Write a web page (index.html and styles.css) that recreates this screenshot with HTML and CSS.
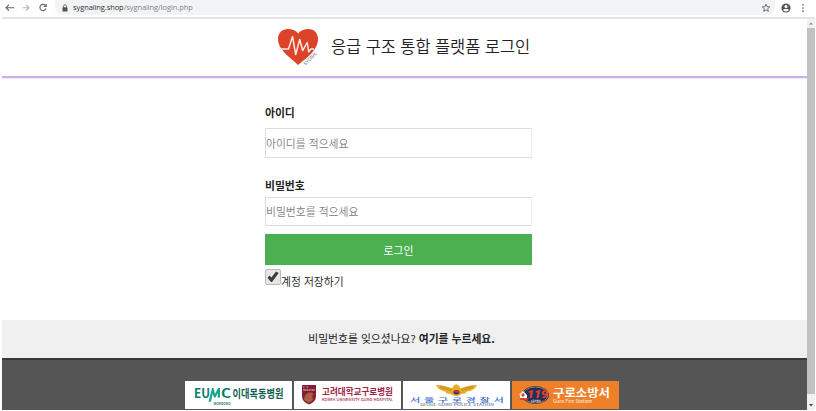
FILE: index.html
```
<!DOCTYPE html>
<html lang="ko">
<head>
<meta charset="utf-8">
<title>응급 구조 통합 플랫폼 로그인</title>
<link rel="stylesheet" href="styles.css">
</head>
<body>
<div class="browser">
  <div class="toolbar">
    <svg class="nav" width="52" height="16" viewBox="0 0 52 16" fill="none" stroke="#5f6368" stroke-width="1.1">
      <path d="M12.300 7.700H4M7 4.700 4 7.700l3 3"/>
      <path stroke="#b4b6b8" d="M20.700 7.700h6M24 4.700l3 3-3 3"/>
      <path d="M43.600 5.800a3.100 3.100 0 1 0 .4 2.500M44.200 4v2.500h-2.500"/>
    </svg>
    <div class="address">
      <svg width="6" height="8" viewBox="0 0 6 8"><path d="M1.500 3.500V2.300a1.500 1.500 0 0 1 3 0v1.200" fill="none" stroke="#5f6368" stroke-width=".9"/><rect x=".5" y="3.200" width="5" height="4.300" rx=".5" fill="#4d5156"/></svg>
      <span class="url"><b>sygnaling.shop</b>/sygnaling/login.php</span>
      <svg class="star" width="10" height="10" viewBox="0 0 10 10"><path d="M5 1.200l1.050 2.500 2.700.2-2.050 1.800.65 2.700L5 6.950 2.650 8.400l.65-2.700-2.050-1.800 2.700-.2z" fill="none" stroke="#5f6368" stroke-width=".9"/></svg>
    </div>
    <svg class="user" width="10" height="10" viewBox="0 0 10 10"><circle cx="5" cy="5" r="4.600" fill="#55595e"/><circle cx="5" cy="3.500" r="1.500" fill="#fff"/><path d="M2 7.100c.5-1.500 5.500-1.500 6 0-1.300 1.700-4.700 1.700-6 0z" fill="#fff"/></svg>
    <svg class="more" width="4" height="10" viewBox="0 0 4 10" fill="#5f6368"><circle cx="2" cy="1.800" r=".85"/><circle cx="2" cy="5" r=".85"/><circle cx="2" cy="8.200" r=".85"/></svg>
  </div>
  <div class="viewport">
    <div class="page">
      <header class="header">
        <svg class="heart" width="44" height="42" viewBox="0 0 44 42">
          <path d="M21 38C17 33 1 24 1 12 1 5.500 5.500 2 11 2c4.500 0 8 1.500 10.200 4.500C23.500 3.500 27 2 31.500 2c5.500 0 9.500 4 9.500 10 0 12-13.500 20.500-20 26z" fill="#dc4328"/>
          <path d="M1 22h10.500l4-12.500 3.200 18 4-15 3 11 4.500-8 1.500 9.500 2-3H37" fill="none" stroke="#fbe9e4" stroke-width="1.500" stroke-linejoin="round"/>
          <text class="mark" transform="translate(28.500 38.500) rotate(-45)" textLength="17" lengthAdjust="spacingAndGlyphs">SYGNAL</text>
        </svg>
        <h1>응급 구조 통합 플랫폼 로그인</h1>
      </header>
      <main class="main">
        <form class="login">
          <label for="uid">아이디</label>
          <input class="field" id="uid" type="text" placeholder="아이디를 적으세요">
          <label class="second" for="pw">비밀번호</label>
          <input class="field" id="pw" type="password" placeholder="비밀번호를 적으세요">
          <button type="button">로그인</button>
          <div class="remember">
            <span class="check"><svg width="14" height="14" viewBox="0 0 14 14"><path d="M1.500 7.700l2-2.100 1.900 1.800 4.700-6 2.600 1.700-6.500 8.600q-.7.700-1.400 0z" fill="#3c3c3c"/></svg></span>
            <span>계정 저장하기</span>
          </div>
        </form>
      </main>
      <div class="forgot">비밀번호를 잊으셨나요? <b>여기를 누르세요.</b></div>
      <footer class="footer">
        <svg class="partner" width="107" height="28" viewBox="0 0 107 28">
          <g class="gothic">
            <text x="9" y="16.500" font-size="12.500" fill="#087b6d" textLength="16" lengthAdjust="spacingAndGlyphs">EU</text>
            <text x="36" y="16.500" font-size="12.500" fill="#087b6d" textLength="10" lengthAdjust="spacingAndGlyphs">C</text>
            <path d="M23.500 21l3.500-14h1.500l1.500 6 3-6H35v9.500h-2.300v-4.500l-2.200 4.500H29l-1.200-4-1.800 8z" fill="#18a18b"/>
            <text x="28.500" y="23.500" font-size="3.500" fill="#17826f" textLength="17" lengthAdjust="spacingAndGlyphs">MOKDONG</text>
            <text x="47.500" y="16.500" font-size="11.500" fill="#146052" textLength="51" lengthAdjust="spacingAndGlyphs">이대목동병원</text>
          </g>
        </svg>
        <svg class="partner" width="107" height="28" viewBox="0 0 107 28">
          <path d="M8 4h14v11q0 6-7 8.500Q8 21 8 15z" fill="#861d35"/>
          <path d="M10 19c1-6 3-7.500 7-7.500l3 2-2 1 1 4.500-4 3z" fill="#aa613f"/>
          <g class="gothic" fill="#a32345">
            <text x="9" y="7" font-size="2" fill="#e0b9bd" textLength="5">KU</text>
            <text x="9" y="10.200" font-size="2.300" fill="#e0b9bd" textLength="12" lengthAdjust="spacingAndGlyphs">MEDICINE</text>
            <text x="28" y="14" font-size="9.500" textLength="71" lengthAdjust="spacingAndGlyphs">고려대학교구로병원</text>
            <text x="28" y="19.800" font-size="3.800" font-weight="500" textLength="71" lengthAdjust="spacingAndGlyphs">KOREA UNIVERSITY GURO HOSPITAL</text>
          </g>
        </svg>
        <svg class="partner" width="107" height="28" viewBox="0 0 107 28">
          <path d="M33 4c6 0 11 1.500 16 3.500l2-3.200 2.500-1 2.500 1.200 1.500 3c5-2 10-3.500 16.500-3.500-1 3-4 5-7 6l-3 .5-2 2-4 .5c-1 1.500-3 2-5 2s-4-.5-5-2l-4-.5-2-2-2-.5c-3-1-6-3-7-6z" fill="#e5ac27"/>
          <path d="M37 6.500l11 3M37 5l12 3.500M70 6.500l-11 3M70 5l-12 3.500" stroke="#b87d1d" stroke-width=".6"/>
          <ellipse cx="53.500" cy="11.200" rx="3" ry="2.200" fill="#263e79"/><path d="M50.500 11.200a3 2.200 0 0 1 6 0q-1.500 1-3 0t-3 0z" fill="#d4312c"/>
          <text class="wide" font-size="9" fill="#3c71d0" textLength="75" lengthAdjust="spacing" transform="translate(7 20.800) scale(1.250 .64)">서울구로경찰서</text>
          <text class="wide" x="17" y="25.300" font-size="2.800" fill="#657083" textLength="74" lengthAdjust="spacingAndGlyphs">SEOUL GURO POLICE STATION</text>
        </svg>
        <svg class="partner fire" width="107" height="28" viewBox="0 0 107 28">
          <ellipse cx="23.500" cy="14" rx="13.500" ry="9" fill="#1f3158"/><ellipse cx="23.500" cy="14" rx="12.500" ry="8" fill="none" stroke="#d3915d" stroke-width=".7"/>
          <path d="M7 14l4-4 4 4v4H8v-4z" fill="#fff"/><path d="M8 17h9l-2 2H8zM11 12l2 2-2 2-2-2z" fill="#d83e31"/>
          <text class="num" x="15" y="17" textLength="21" lengthAdjust="spacingAndGlyphs">119</text>
          <g class="gothic" fill="#fff">
            <text x="18.500" y="20.800" font-size="2.300" textLength="10" lengthAdjust="spacingAndGlyphs">구로소방서</text>
            <text x="41" y="16" font-size="10.800" textLength="57" lengthAdjust="spacingAndGlyphs">구로소방서</text>
            <text x="41" y="21.600" font-size="4.200" fill="#ffe2cb" font-weight="500" textLength="39" lengthAdjust="spacingAndGlyphs">Guro Fire Station</text>
          </g>
        </svg>
      </footer>
    </div>
    <div class="scrollbar">
      <svg width="8" height="9" viewBox="0 0 8 9"><path d="M2 5.500l2-2 2 2z" fill="#858585"/></svg>
      <div class="thumb"></div>
      <svg width="8" height="16" viewBox="0 0 8 16"><path d="M2 10h4l-2 2.500z" fill="#444"/></svg>
    </div>
  </div>
</div>
</body>
</html>
```
FILE: styles.css
```
* { box-sizing: border-box; }
body {
  margin: 0;
  background: #fff;
  color: #222;
  font-family: "Noto Sans CJK KR", sans-serif;
  overflow: hidden;
}
.browser { width: 816px; height: 411px; display: flex; flex-direction: column; padding: 0 1px 1px 2px; }
.toolbar { height: 19px; display: flex; align-items: flex-start; border-bottom: 2px solid #e4e4e4; flex: none; }
.nav { flex: none; }
.address {
  width: 720px; height: 15px; margin-left: 1px; padding: 0 4px 0 7px;
  display: flex; align-items: center; gap: 5px;
  background: #f1f3f4; border-radius: 0 0 8px 8px;
}
.url { font: 7.5px/15px "Open Sans", sans-serif; color: #80868b; letter-spacing: -.09px; }
.url b { font-weight: 400; color: #303134; }
.star { margin-left: auto; }
.user { margin: 3px 0 0 6px; }
.more { margin: 3px 0 0 10px; }
.viewport { display: flex; flex: 1; min-height: 0; }
.page { flex: 1; display: flex; flex-direction: column; min-width: 0; }
.header {
  height: 59px; flex: none; display: flex; align-items: center;
  padding: 0 0 1px 275px; border-bottom: 2px solid #c9b1eb;
  box-shadow: 0 1px 0 #efe8f8;
}
.heart { margin-top: 2px; flex: none; overflow: visible; }
h1 { margin: -2px 0 0 10px; font-size: 16.5px; line-height: 24px; font-weight: 350; letter-spacing: -.1px; white-space: nowrap; }
.mark { font: 5px "Liberation Sans", sans-serif; fill: #666; }
.main { height: 242px; flex: none; padding: 26px 0 0 263px; }
.login { width: 267px; display: flex; flex-direction: column; }
label { font-size: 10.8px; line-height: 16px; font-weight: 700; }
.second { margin-top: 19px; }
.field {
  height: 30px; margin-top: 8px; padding: 0 0 1px;
  border: 1px solid #ddd; border-right-color: #eee;
  font: 350 10.8px "Noto Sans CJK KR", sans-serif; background: #fff; border-radius: 0;
}
.second + .field { height: 29px; margin-top: 4px; }
.field::placeholder { color: #808080; opacity: 1; }
button {
  height: 31px; margin-top: 8px; padding: 0; border: 0;
  background: #4caf50; color: #fff; font: 400 10.8px "Noto Sans CJK KR", sans-serif;
}
.remember { display: flex; margin-top: 4px; font-size: 10.8px; line-height: 25px; font-weight: 350; }
.check { width: 16px; height: 16px; display: flex; border: 1px solid #b9b9b9; border-radius: 2px; background: #e6e6e6; }
.forgot { height: 38px; flex: none; background: #f0f0f0; text-align: center; font-size: 10.8px; line-height: 37px; padding-right: 6px; }
.footer { flex: 1; background: #555; border-top: 2px solid #393939; padding: 21px 0 0 183px; display: flex; gap: 2px; }
.partner { background: #fff; flex: none; overflow: visible; }
.fire { background: #ed8029; }
.gothic { font-family: "Noto Sans CJK KR", sans-serif; font-weight: 700; }
.wide { font-family: "Noto Sans CJK KR", sans-serif; font-weight: 500; }
.num { font: italic 900 10.5px Roboto, sans-serif; fill: #e8402f; }
.scrollbar { width: 8px; flex: none; background: #f1f1f1; display: flex; flex-direction: column; }
.thumb { flex: 1; background: #c1c1c1; }
```
